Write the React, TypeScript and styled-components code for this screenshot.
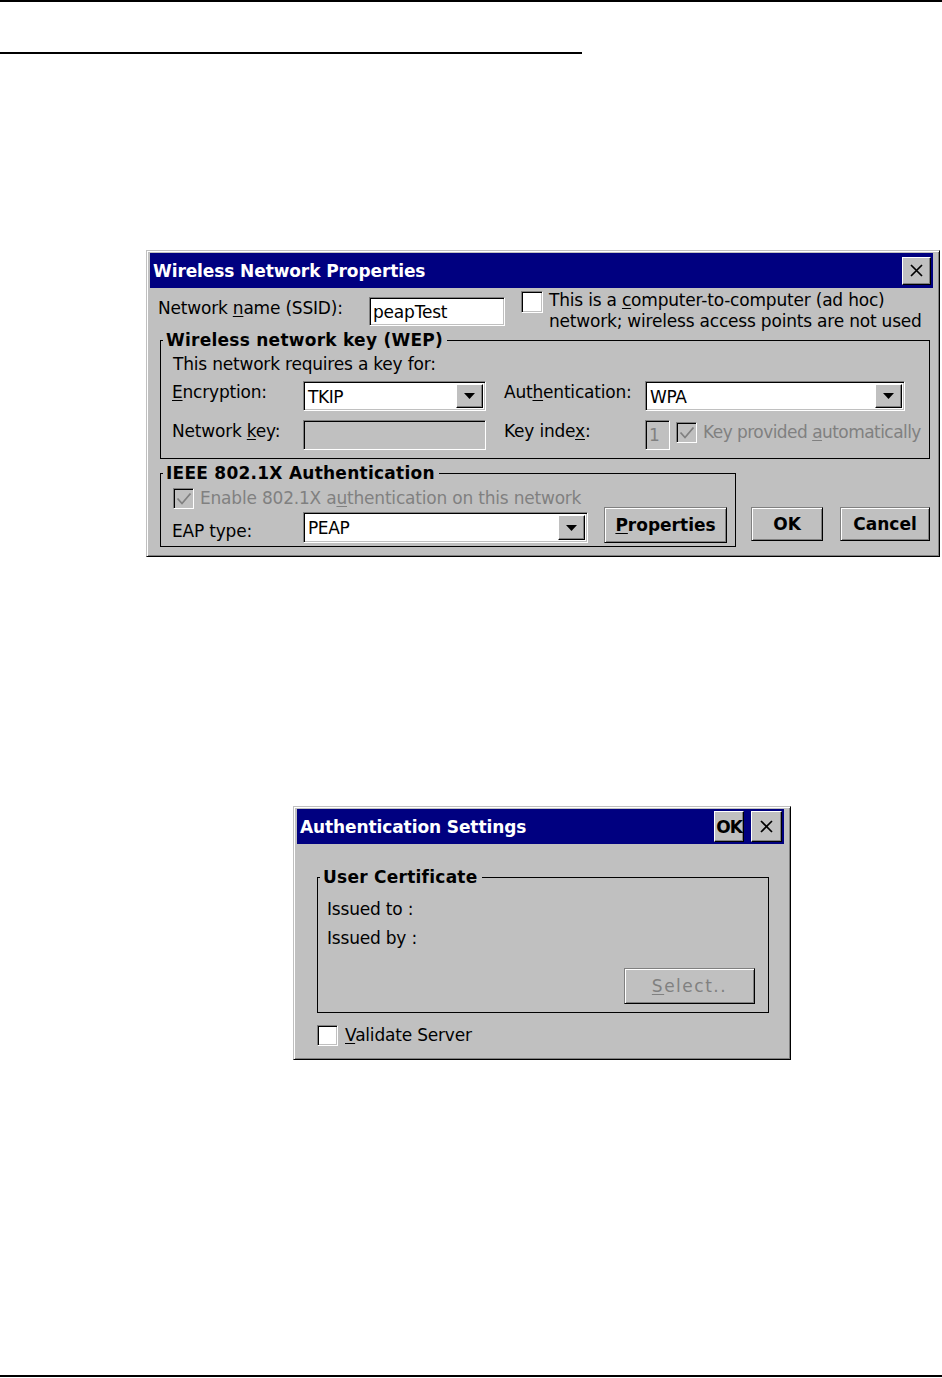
import React from "react";
import styled, { createGlobalStyle, css } from "styled-components";

const GlobalStyle = createGlobalStyle`
  html, body {
    margin: 0;
    padding: 0;
    background: #fff;
  }
  body {
    font-family: "DejaVu Sans", "Liberation Sans", sans-serif;
    font-size: 17px;
    letter-spacing: -0.2px;
    color: #000;
  }
`;

const raised = css`
  box-sizing: border-box;
  background: #c0c0c0;
  border: 1px solid;
  border-color: #fff #000 #000 #fff;
  box-shadow: inset -1px -1px 0 #808080;
`;

const sunken = css`
  box-sizing: border-box;
  border: 1px solid;
  border-color: #808080 #fff #fff #808080;
  box-shadow: inset 1px 1px 0 #000, inset -1px -1px 0 #c0c0c0;
`;

const Page = styled.div`
  width: 942px;
  height: 1378px;
  display: flex;
  flex-direction: column;
  background: #fff;
  overflow: hidden;
`;

const Rule = styled.div<{ $width?: number; $thick: number; $top: number }>`
  width: ${(p) => (p.$width ? `${p.$width}px` : "100%")};
  height: ${(p) => p.$thick}px;
  margin-top: ${(p) => p.$top}px;
  background: #000;
  flex-shrink: 0;
`;

const BottomRule = styled.div`
  margin-top: auto;
  margin-bottom: 1px;
  height: 2px;
  background: #000;
`;

const Window = styled.div<{ $w: number; $h: number; $left: number; $top: number }>`
  width: ${(p) => p.$w}px;
  height: ${(p) => p.$h}px;
  margin-left: ${(p) => p.$left}px;
  margin-top: ${(p) => p.$top}px;
  flex-shrink: 0;
  box-sizing: border-box;
  background: #c0c0c0;
  border: 1px solid;
  border-color: #c0c0c0 #000 #000 #c0c0c0;
  box-shadow: inset 1px 1px 0 #fff, inset -1px -1px 0 #808080;
  padding: 2px 6px 2px 3px;
  display: flex;
  flex-direction: column;
`;

const TitleBar = styled.div`
  height: 35px;
  flex-shrink: 0;
  background: #000080;
  display: flex;
  align-items: center;
  padding-left: 3px;
  gap: 7px;
`;

const TitleText = styled.span`
  flex: 1;
  color: #fff;
  font-weight: bold;
  font-size: 17px;
  letter-spacing: -0.1px;
  white-space: nowrap;
`;

const TitleButton = styled.div<{ $w: number; $h: number }>`
  ${raised};
  width: ${(p) => p.$w}px;
  height: ${(p) => p.$h}px;
  display: flex;
  align-items: center;
  justify-content: center;
  font-weight: bold;
  font-size: 17px;
  letter-spacing: -1px;
  &:last-child {
    margin-right: 2px;
  }
`;

const Content = styled.div`
  flex: 1;
  display: flex;
  flex-direction: column;
`;

const Row = styled.div<{ $h?: number; $top?: number; $left?: number }>`
  display: flex;
  align-items: flex-start;
  flex-shrink: 0;
  height: ${(p) => (p.$h ? `${p.$h}px` : "auto")};
  margin-top: ${(p) => p.$top ?? 0}px;
  margin-left: ${(p) => p.$left ?? 0}px;
`;

const Label = styled.span<{
  $w?: number;
  $top?: number;
  $left?: number;
  $dim?: boolean;
  $spacing?: number;
}>`
  display: block;
  flex-shrink: 0;
  width: ${(p) => (p.$w ? `${p.$w}px` : "auto")};
  margin-top: ${(p) => p.$top ?? 0}px;
  margin-left: ${(p) => p.$left ?? 0}px;
  line-height: 20px;
  white-space: nowrap;
  letter-spacing: ${(p) => (p.$spacing ?? -0.2)}px;
  color: ${(p) => (p.$dim ? "#808080" : "#000")};
`;

const U = styled.span`
  text-decoration: underline;
  text-underline-offset: 2px;
`;

const AdHocText = styled.div`
  margin-left: 6px;
  margin-top: 2px;
  line-height: 21px;
  white-space: nowrap;
`;

const TextField = styled.div<{ $w: number; $h: number; $top?: number; $disabled?: boolean }>`
  ${sunken};
  width: ${(p) => p.$w}px;
  height: ${(p) => p.$h}px;
  margin-top: ${(p) => p.$top ?? 0}px;
  flex-shrink: 0;
  background: ${(p) => (p.$disabled ? "#c0c0c0" : "#fff")};
  color: ${(p) => (p.$disabled ? "#808080" : "#000")};
  padding: 3px 0 0 3px;
  line-height: 22px;
  white-space: nowrap;
`;

const Combo = styled.div<{ $w: number; $h: number; $top?: number }>`
  ${sunken};
  width: ${(p) => p.$w}px;
  height: ${(p) => p.$h}px;
  margin-top: ${(p) => p.$top ?? 0}px;
  flex-shrink: 0;
  background: #fff;
  display: flex;
  align-items: stretch;
  padding: 2px;
`;

const ComboValue = styled.span`
  flex: 1;
  padding-left: 2px;
  line-height: 26px;
  letter-spacing: -0.4px;
`;

const DropButton = styled.div`
  ${raised};
  width: 27px;
  display: flex;
  align-items: center;
  justify-content: center;
`;

const Box = styled.div<{ $size: number; $top?: number; $left?: number; $disabled?: boolean }>`
  ${sunken};
  width: ${(p) => p.$size}px;
  height: ${(p) => p.$size}px;
  margin-top: ${(p) => p.$top ?? 0}px;
  margin-left: ${(p) => p.$left ?? 0}px;
  flex-shrink: 0;
  background: ${(p) => (p.$disabled ? "#c0c0c0" : "#fff")};
  display: flex;
  align-items: center;
  justify-content: center;
`;

const Group = styled.fieldset<{ $w: number; $h: number; $left: number; $top?: number }>`
  box-sizing: border-box;
  width: ${(p) => p.$w}px;
  height: ${(p) => p.$h}px;
  margin: ${(p) => p.$top ?? 0}px 0 0 ${(p) => p.$left}px;
  padding: 0;
  border: 1px solid #000;
  min-inline-size: 0;
  flex-shrink: 0;
`;

const Legend = styled.legend`
  margin-left: 2px;
  padding: 0 4px 0 3px;
  font-weight: bold;
  font-size: 17px;
  line-height: 18px;
  letter-spacing: 0.25px;
  white-space: nowrap;
`;

const GroupBody = styled.div`
  display: flex;
  flex-direction: column;
`;

const PushButton = styled.div<{ $w: number; $h: number; $disabled?: boolean; $top?: number; $left?: number }>`
  box-sizing: border-box;
  width: ${(p) => p.$w}px;
  height: ${(p) => p.$h}px;
  margin-top: ${(p) => p.$top ?? 0}px;
  margin-left: ${(p) => p.$left ?? 0}px;
  flex-shrink: 0;
  background: #c0c0c0;
  border: 1px solid;
  border-color: #808080 #000 #000 #808080;
  box-shadow: inset 1px 1px 0 #fff, inset -1px -1px 0 #808080;
  display: flex;
  align-items: center;
  justify-content: center;
  font-weight: ${(p) => (p.$disabled ? "normal" : "bold")};
  letter-spacing: ${(p) => (p.$disabled ? "1.5px" : "0")};
  color: ${(p) => (p.$disabled ? "#808080" : "#000")};
  white-space: nowrap;
`;

const ButtonGroup = styled.div`
  display: flex;
  gap: 17px;
  margin-left: 15px;
  margin-top: 44px;
`;

const CloseGlyph = () => (
  <svg width="13" height="13" viewBox="0 0 13 13">
    <path d="M1 1 L12 12 M12 1 L1 12" stroke="#000" strokeWidth="1.7" />
  </svg>
);

const DownArrow = () => (
  <svg width="11" height="6" viewBox="0 0 11 6">
    <polygon points="0,0 11,0 5.5,6" fill="#000" />
  </svg>
);

const Check = ({ color = "#808080" }: { color?: string }) => (
  <svg width="16" height="14" viewBox="0 0 16 14">
    <polyline points="1.5,6.5 6,11.5 14.5,1.5" fill="none" stroke={color} strokeWidth="1.8" />
  </svg>
);

const WirelessDialog = () => (
  <Window $w={794} $h={307} $left={146} $top={196}>
    <TitleBar>
      <TitleText>Wireless Network Properties</TitleText>
      <TitleButton $w={29} $h={28}>
        <CloseGlyph />
      </TitleButton>
    </TitleBar>
    <Content>
      <Row $h={43}>
        <Label $w={211} $top={10} $left={8}>
          Network <U>n</U>ame (SSID):
        </Label>
        <TextField $w={136} $h={29} $top={9}>
          peapTest
        </TextField>
        <Box $size={22} $top={3} $left={16} />
        <AdHocText>
          This is a <U>c</U>omputer-to-computer (ad hoc)
          <br />
          network; wireless access points are not used
        </AdHocText>
      </Row>

      <Group $w={770} $h={128} $left={10}>
        <Legend>Wireless network key (WEP)</Legend>
        <GroupBody>
          <Label $top={5} $left={12}>
            This network requires a key for:
          </Label>
          <Row $h={30} $top={7}>
            <Label $w={131} $top={1} $left={11}>
              <U>E</U>ncryption:
            </Label>
            <Combo $w={183} $h={30}>
              <ComboValue>TKIP</ComboValue>
              <DropButton>
                <DownArrow />
              </DropButton>
            </Combo>
            <Label $w={141} $top={1} $left={18}>
              Aut<U>h</U>entication:
            </Label>
            <Combo $w={260} $h={30}>
              <ComboValue>WPA</ComboValue>
              <DropButton>
                <DownArrow />
              </DropButton>
            </Combo>
          </Row>
          <Row $h={30} $top={9}>
            <Label $w={131} $top={1} $left={11}>
              Network <U>k</U>ey:
            </Label>
            <TextField $w={183} $h={30} $disabled />
            <Label $w={141} $top={1} $left={18}>
              Key inde<U>x</U>:
            </Label>
            <TextField $w={25} $h={30} $disabled>
              1
            </TextField>
            <Box $size={21} $top={2} $left={6} $disabled>
              <Check />
            </Box>
            <Label $top={2} $left={6} $dim $spacing={-0.55}>
              Key provided <U>a</U>utomatically
            </Label>
          </Row>
        </GroupBody>
      </Group>

      <Row $top={5}>
        <Group $w={576} $h={83} $left={10}>
          <Legend>IEEE 802.1X Authentication</Legend>
          <GroupBody>
            <Row $h={20} $top={6} $left={12}>
              <Box $size={21} $disabled>
                <Check />
              </Box>
              <Label $left={6} $dim>
                Enable 802.1X a<U>u</U>thentication on this network
              </Label>
            </Row>
            <Row $h={36}>
              <Label $w={131} $top={13} $left={11}>
                EAP type:
              </Label>
              <Combo $w={285} $h={31} $top={4}>
                <ComboValue>PEAP</ComboValue>
                <DropButton>
                  <DownArrow />
                </DropButton>
              </Combo>
              <PushButton $w={123} $h={36} $left={16} $top={-1}>
                <U>P</U>roperties
              </PushButton>
            </Row>
          </GroupBody>
        </Group>
        <ButtonGroup>
          <PushButton $w={72} $h={34} $top={-1}>
            OK
          </PushButton>
          <PushButton $w={90} $h={34} $top={-1}>
            Cancel
          </PushButton>
        </ButtonGroup>
      </Row>
    </Content>
  </Window>
);

const AuthDialog = () => (
  <Window $w={498} $h={254} $left={293} $top={249}>
    <TitleBar>
      <TitleText>Authentication Settings</TitleText>
      <TitleButton $w={30} $h={31}>
        OK
      </TitleButton>
      <TitleButton $w={31} $h={31}>
        <CloseGlyph />
      </TitleButton>
    </TitleBar>
    <Content>
      <Group $w={452} $h={145} $left={20} $top={24}>
        <Legend>User Certificate</Legend>
        <GroupBody>
          <Label $top={13} $left={9}>
            Issued to :
          </Label>
          <Label $top={9} $left={9}>
            Issued by :
          </Label>
          <Row $top={20}>
            <PushButton $w={131} $h={36} $left={306} $disabled>
              <U>S</U>elect..
            </PushButton>
          </Row>
        </GroupBody>
      </Group>
      <Row $top={12} $left={20}>
        <Box $size={21} />
        <Label $left={7}>
          <U>V</U>alidate Server
        </Label>
      </Row>
    </Content>
  </Window>
);

export default function App() {
  return (
    <>
      <GlobalStyle />
      <Page>
        <Rule $thick={2} $top={0} />
        <Rule $thick={2} $top={50} $width={582} />
        <WirelessDialog />
        <AuthDialog />
        <BottomRule />
      </Page>
    </>
  );
}
